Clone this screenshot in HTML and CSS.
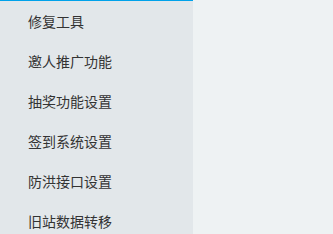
FILE: index.html
```html
<!DOCTYPE html>
<html lang="zh">
<head>
<meta charset="utf-8">
<link rel="stylesheet" href="styles.css">
</head>
<body>
<div class="layout">
  <nav class="sidebar">
    <a class="item">修复工具</a>
    <a class="item">邀人推广功能</a>
    <a class="item">抽奖功能设置</a>
    <a class="item">签到系统设置</a>
    <a class="item">防洪接口设置</a>
    <a class="item">旧站数据转移</a>
  </nav>
  <main class="main"></main>
</div>
</body>
</html>
```
FILE: styles.css
```css
html, body {
  margin: 0;
  padding: 0;
  height: 100%;
  overflow: hidden;
}
body {
  background: #eef2f3;
  font-family: "Noto Sans CJK SC", "Noto Sans", sans-serif;
}
.layout {
  display: flex;
  height: 100%;
}
.sidebar {
  width: 193px;
  flex: none;
  background: #e2e7ea;
  border-top: 1px solid #00a2ea;
  display: flex;
  flex-direction: column;
}
.item {
  height: 40px;
  line-height: 40px;
  padding-left: 28px;
  font-size: 14px;
  color: #333;
  flex: none;
}
.main {
  flex: 1;
  background: #eef2f3;
}
```
